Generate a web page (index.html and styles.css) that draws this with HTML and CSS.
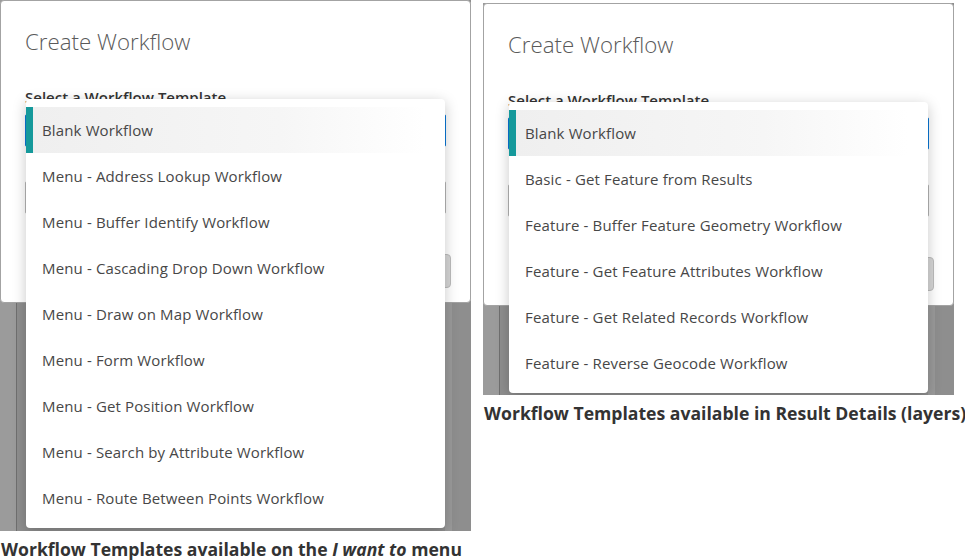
FILE: index.html
```html
<!DOCTYPE html>
<html>
<head>
<meta charset="utf-8">
<link rel="stylesheet" href="styles.css">
</head>
<body>
<div class="page">
  <figure class="fig fig-left">
    <div class="shot shot-tall">
      <div class="dialog">
        <h2 class="title">Create Workflow</h2>
        <div class="label">Select a Workflow Template</div>
        <div class="field field-focus"></div>
        <div class="label-gap"></div>
        <div class="field"></div>
        <div class="footer"><span class="btn"></span></div>
      </div>
      <ul class="dropdown">
        <li class="item selected">Blank Workflow</li>
        <li class="item">Menu - Address Lookup Workflow</li>
        <li class="item">Menu - Buffer Identify Workflow</li>
        <li class="item">Menu - Cascading Drop Down Workflow</li>
        <li class="item">Menu - Draw on Map Workflow</li>
        <li class="item">Menu - Form Workflow</li>
        <li class="item">Menu - Get Position Workflow</li>
        <li class="item">Menu - Search by Attribute Workflow</li>
        <li class="item">Menu - Route Between Points Workflow</li>
      </ul>
    </div>
    <figcaption class="caption">Workflow Templates available on the <em>I want to</em> menu</figcaption>
  </figure>
  <figure class="fig fig-right">
    <div class="shot shot-short">
      <div class="dialog">
        <h2 class="title">Create Workflow</h2>
        <div class="label">Select a Workflow Template</div>
        <div class="field field-focus"></div>
        <div class="label-gap"></div>
        <div class="field"></div>
        <div class="footer"><span class="btn"></span></div>
      </div>
      <ul class="dropdown">
        <li class="item selected">Blank Workflow</li>
        <li class="item">Basic - Get Feature from Results</li>
        <li class="item">Feature - Buffer Feature Geometry Workflow</li>
        <li class="item">Feature - Get Feature Attributes Workflow</li>
        <li class="item">Feature - Get Related Records Workflow</li>
        <li class="item">Feature - Reverse Geocode Workflow</li>
      </ul>
    </div>
    <figcaption class="caption">Workflow Templates available in Result Details (layers)</figcaption>
  </figure>
</div>
</body>
</html>
```
FILE: styles.css
```css
* { box-sizing: border-box; }
html, body { margin: 0; padding: 0; background: #fff; }
body { font-family: "Open Sans", "Noto Sans", sans-serif; color: #444; }

.page {
  display: flex;
  align-items: flex-start;
  gap: 12px;
}
.fig { margin: 0; width: 471px; }
.fig-right { margin-top: 3px; }

.shot {
  position: relative;
  width: 471px;
  overflow: hidden;
  background: linear-gradient(to right, #9b9b9b 0 16px, #6f6f6f 16px 17px, #8e8e8e 17px 445px, #9a9a9a 445px 452px, #8e8e8e 452px);
}
.shot-tall { height: 531px; }
.shot-short { height: 392px; }

.dialog {
  height: 303px;
  background: #fff;
  border: 1px solid #a3a3a3;
  border-radius: 4px;
  padding: 23px 24px 0 24px;
  display: flex;
  flex-direction: column;
}
.title {
  margin: 0;
  font-size: 22.3px;
  font-weight: 300;
  line-height: 36px;
  color: #5a5a5a;
  height: 36px;
}
.label {
  margin-top: 27px;
  font-size: 15px;
  font-weight: 600;
  line-height: 20px;
  color: #333;
}
.label-gap { height: 34px; }
.field {
  height: 33px;
  border: 1px solid #b5b5b5;
  border-radius: 2px;
}
.field-focus { border-color: #0a78d7; margin-top: 7px; }
.footer {
  margin-top: 40px;
  display: flex;
  justify-content: flex-end;
  margin-right: -5px;
}
.btn {
  width: 70px;
  height: 34px;
  background: #d6d6d6;
  border: 1px solid #bcbcbc;
  border-radius: 4px;
}

.dropdown {
  position: absolute;
  top: 99px;
  left: 26px;
  width: 419px;
  margin: 0;
  padding: 8px 0 7px;
  list-style: none;
  background: #fff;
  border-radius: 4px;
  box-shadow: 0 3px 14px rgba(0, 0, 0, 0.22);
}
.item {
  height: 46px;
  line-height: 47px;
  padding-left: 16px;
  font-size: 15px;
  letter-spacing: 0.14px;
  color: #474747;
  white-space: nowrap;
}
.selected {
  border-left: 7px solid #15999b;
  padding-left: 9px;
  background: linear-gradient(to right, #efefef 0%, #f6f6f6 60%, #ffffff 95%);
}

.caption {
  margin-top: 6px;
  padding-left: 1px;
  font-size: 17.6px;
  font-weight: 700;
  line-height: 24px;
  color: #333;
  white-space: nowrap;
}
.caption em { font-style: italic; }
```
